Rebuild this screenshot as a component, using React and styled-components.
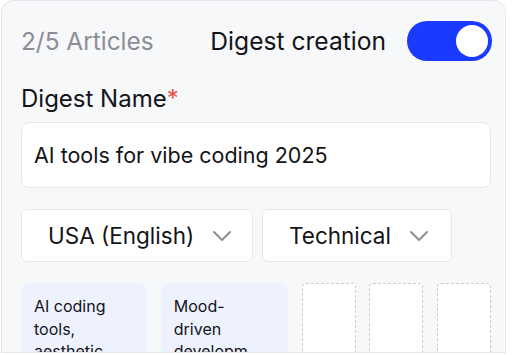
import React from 'react';
import styled, { createGlobalStyle } from 'styled-components';
import { ChevronDown } from 'lucide-react';

const GlobalStyle = createGlobalStyle`
  html, body {
    margin: 0;
    padding: 0;
    background: #ffffff;
  }
  body {
    font-family: Inter, "Noto Sans", sans-serif;
    color: #131417;
  }
`;

const Panel = styled.div`
  box-sizing: border-box;
  width: 505px;
  height: 353px;
  margin: 0 0 0 1px;
  padding: 20px 13px 0 19px;
  background: #f7f8fa;
  border: 1px solid #e6e7ea;
  border-radius: 12px 12px 0 0;
  overflow: hidden;
  display: flex;
  flex-direction: column;
  & > * {
    flex-shrink: 0;
  }
`;

const Header = styled.div`
  display: flex;
  align-items: center;
  height: 40px;
`;

const Count = styled.span`
  font-size: 24.4px;
  color: #8b8e95;
  flex: 1;
`;

const ToggleLabel = styled.span`
  font-size: 24.6px;
  color: #131417;
  margin-right: 21px;
`;

const Switch = styled.div`
  box-sizing: border-box;
  width: 85px;
  height: 40px;
  border-radius: 20px;
  background: ${p => (p.$on ? '#1a3bff' : '#d4d6db')};
  padding: 4px;
  display: flex;
  justify-content: ${p => (p.$on ? 'flex-end' : 'flex-start')};
`;

const Knob = styled.div`
  width: 32px;
  height: 32px;
  border-radius: 50%;
  background: #ffffff;
`;

const Label = styled.label`
  margin-top: 24px;
  font-size: 24px;
  line-height: 28px;
  color: #131417;
`;

const Required = styled.span`
  color: #f0504f;
`;

const TextField = styled.div`
  box-sizing: border-box;
  margin-top: 9px;
  height: 66px;
  width: 470px;
  background: #ffffff;
  border: 1px solid #e6e7ea;
  border-radius: 8px;
  padding: 0 12px;
  display: flex;
  align-items: center;
  font-size: 21.5px;
`;

const SelectRow = styled.div`
  display: flex;
  gap: 9px;
  margin-top: 21px;
`;

const Select = styled.div`
  box-sizing: border-box;
  height: 53px;
  width: ${p => p.$width}px;
  background: #ffffff;
  border: 1px solid #e6e7ea;
  border-radius: 6px;
  padding-left: 26px;
  display: flex;
  align-items: center;
  gap: 12px;
  font-size: 22.5px;
  color: #131417;
  svg {
    color: #8b8e95;
  }
`;

const Slots = styled.div`
  display: grid;
  grid-template-columns: 126px 127px 54px 54px 54px;
  column-gap: 13.75px;
  margin-top: 21px;
  width: 470px;
`;

const ArticleCard = styled.div`
  box-sizing: border-box;
  height: 100px;
  background: #eef2fe;
  border-radius: 8px;
  padding: 12px 18px 12px 13px;
  font-size: 16px;
  line-height: 22.5px;
  color: #131417;
`;

const EmptySlot = styled.div`
  box-sizing: border-box;
  height: 100px;
  background: #ffffff;
  border: 1.5px dashed #c9ccd1;
  border-radius: 4px;
`;

const articles = [
  'AI coding tools, aesthetic...',
  'Mood-driven developm...',
];

export default function App() {
  return (
    <>
      <GlobalStyle />
      <Panel>
        <Header>
          <Count>2/5 Articles</Count>
          <ToggleLabel>Digest creation</ToggleLabel>
          <Switch $on>
            <Knob />
          </Switch>
        </Header>
        <Label>
          Digest Name<Required>*</Required>
        </Label>
        <TextField>AI tools for vibe coding 2025</TextField>
        <SelectRow>
          <Select $width={232}>
            USA (English)
            <ChevronDown size={32} strokeWidth={1.5} />
          </Select>
          <Select $width={190}>
            Technical
            <ChevronDown size={32} strokeWidth={1.5} />
          </Select>
        </SelectRow>
        <Slots>
          {articles.map(a => (
            <ArticleCard key={a}>{a}</ArticleCard>
          ))}
          <EmptySlot />
          <EmptySlot />
          <EmptySlot />
        </Slots>
      </Panel>
    </>
  );
}
